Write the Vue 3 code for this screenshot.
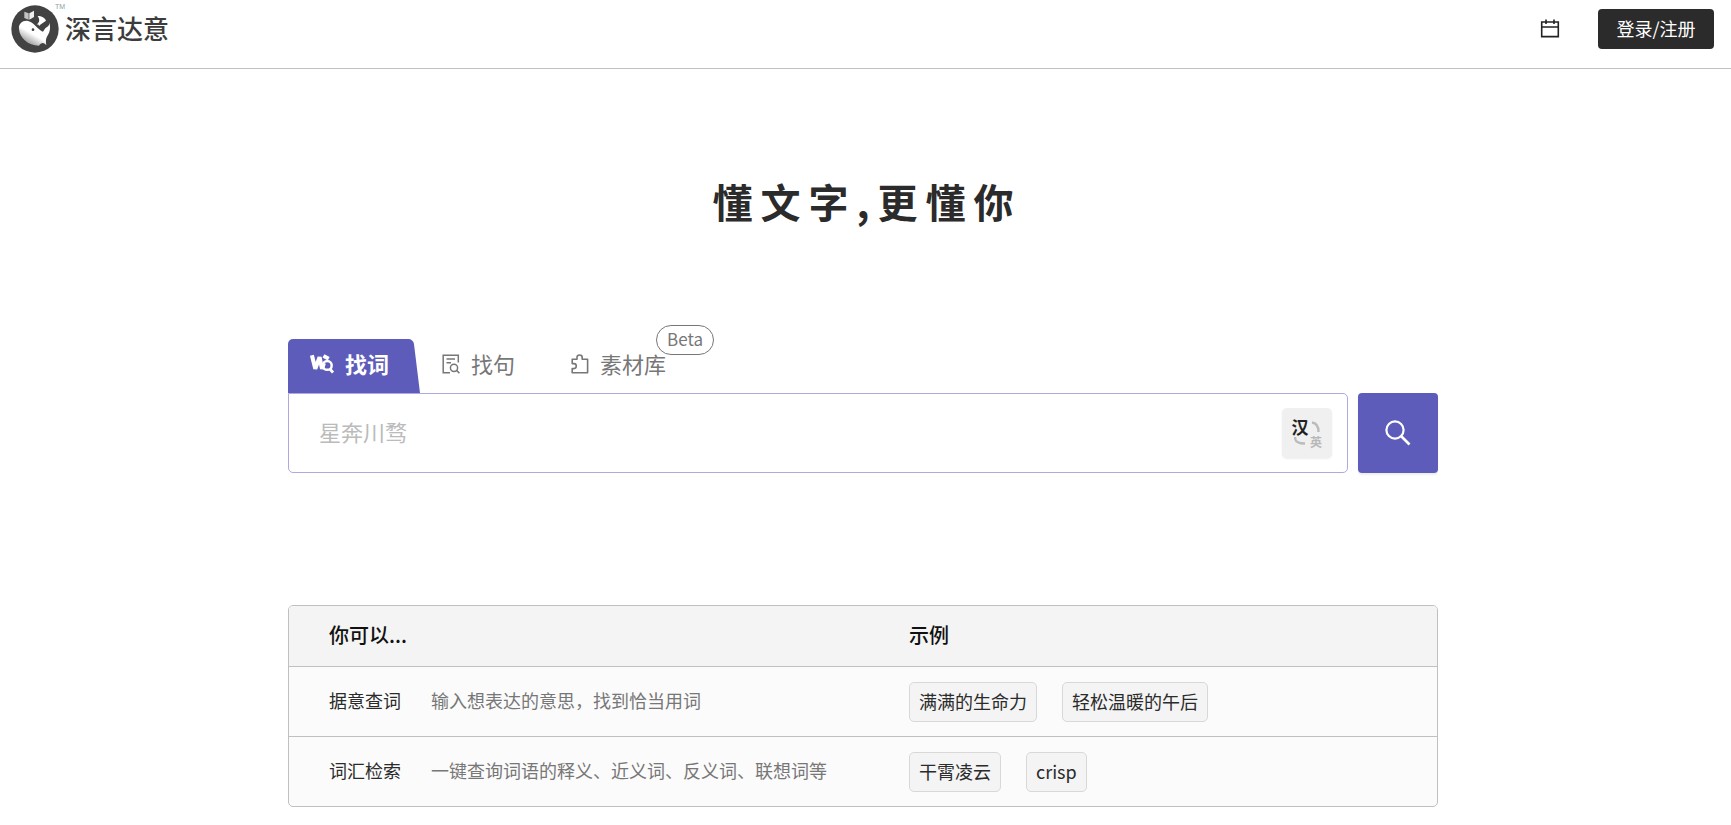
<template>
  <div class="page">
    <header class="header">
      <a class="logo" href="#" aria-label="深言达意">
        <svg class="logo-mark" viewBox="0 0 144 144" aria-hidden="true">
          <defs>
            <linearGradient id="whale" x1="0.15" y1="0.9" x2="0.55" y2="0.35">
              <stop offset="0" stop-color="#8f8b8b" />
              <stop offset="0.7" stop-color="#ffffff" />
            </linearGradient>
          </defs>
          <circle cx="72" cy="72" r="71" fill="#424242" />
          <path d="M24 72C22 55 37 45 51 48C68 51 80 74 96 80C100 76 101 70 108 66C113 63 115 58 115 53C119 66 118 80 109 93C104 101 104 110 106 121C98 112 91 112 84 122C50 122 26 98 24 72Z" fill="url(#whale)" />
          <path d="M80 33C92 33 102 39 105 47C98 53 90 55 84 63C83 57 81 58 77 59C86 52 87 43 80 33Z" fill="#fff" />
          <path d="M40 20L53 25V44L40 39Z" fill="#c4c4c4" />
          <path d="M55 25L69 17V36L55 44Z" fill="#f0f0f0" />
          <circle cx="66" cy="74" r="4" fill="#424242" />
        </svg>
        <span class="logo-text">深言达意</span>
        <span class="logo-tm">TM</span>
      </a>
      <div class="header-right">
        <button class="calendar" type="button" aria-label="日历">
          <svg viewBox="0 0 20 20" width="20" height="20" fill="none" stroke="#222" stroke-width="1.6">
            <path d="M1.7 3H18.3V17.6H1.7ZM1.7 8H18.3M6 0.4V5M14 0.4V5" />
          </svg>
        </button>
        <button class="login" type="button">登录/注册</button>
      </div>
    </header>

    <main class="main">
      <h1 class="slogan">懂文字,更懂你</h1>

      <!-- 搜索类型切换 -->
      <nav class="tabs">
        <button
          v-for="tab in tabs"
          :key="tab.key"
          type="button"
          class="tab"
          :class="{ active: tab.key === activeTab }"
          @click="activeTab = tab.key"
        >
          <svg v-if="tab.key === 'word'" class="tab-icon wide" viewBox="0 0 25 20" fill="none" stroke="currentColor">
            <path d="M2 1L5.5 15L10 3L12.5 15L14.5 9" stroke-width="4.2" stroke-linejoin="bevel" />
            <path d="M14 1.5L19.5 4.5" stroke-width="4" />
            <circle cx="18" cy="11.5" r="4.6" stroke-width="2.6" />
            <path d="M20.5 15L24 19" stroke-width="3" />
          </svg>
          <svg v-else-if="tab.key === 'sentence'" class="tab-icon" viewBox="0 0 18 20" fill="none" stroke="currentColor" stroke-width="1.5">
            <path d="M16.3 8.5V1.2H1.2V18.8H8M4.5 5H13M4.5 8.8H9" />
            <circle cx="12" cy="13.8" r="3.6" />
            <path d="M14.6 16.4L17.4 19.2" />
          </svg>
          <svg v-else class="tab-icon" viewBox="0 0 18 20" fill="none" stroke="currentColor" stroke-width="1.6" stroke-linejoin="round">
            <path d="M1.2 5.2H6V3.5C6 0.2 11.2 0.2 11.2 3.5V5.2H16.6V18.8H1.2V14.6H3C6 14.6 6 9.6 3 9.6H1.2Z" />
          </svg>
          <span>{{ tab.name }}</span>
          <span v-if="tab.beta" class="beta">Beta</span>
        </button>
      </nav>

      <form class="search" @submit.prevent>
        <div class="search-box">
          <input v-model="keyword" class="search-input" type="text" placeholder="星奔川骛" aria-label="搜索" />
          <button class="lang" type="button" aria-label="切换语言" @click="toggleLang">
            <span class="lang-main">{{ langs[0] }}</span>
            <svg class="arc" viewBox="0 0 12 12"><path d="M2 1.5C6.5 2 8.5 4.5 8.5 11" /></svg>
            <svg class="arc" viewBox="0 0 12 12"><path d="M1 1C1 6 4 7.5 11 7.5" /></svg>
            <span class="lang-sub">{{ langs[1] }}</span>
          </button>
        </div>
        <button class="search-btn" type="submit" aria-label="搜索">
          <svg viewBox="0 0 26 26" width="26" height="26" fill="none" stroke="#fff" stroke-width="2.2">
            <circle cx="10" cy="10" r="8.6" />
            <path d="M16 16L24.5 24.5" stroke-width="2.6" />
          </svg>
        </button>
      </form>

      <!-- 使用示例 -->
      <table class="guide">
        <colgroup>
          <col class="col-name" />
          <col />
          <col class="col-examples" />
        </colgroup>
        <thead>
          <tr>
            <th colspan="2">你可以...</th>
            <th>示例</th>
          </tr>
        </thead>
        <tbody>
          <tr v-for="row in guides" :key="row.name">
            <td class="guide-name">{{ row.name }}</td>
            <td class="guide-desc">{{ row.desc }}</td>
            <td>
              <div class="examples">
                <button
                  v-for="item in row.examples"
                  :key="item"
                  type="button"
                  class="example"
                  @click="keyword = item"
                >{{ item }}</button>
              </div>
            </td>
          </tr>
        </tbody>
      </table>
    </main>
  </div>
</template>

<script setup>
import { ref } from 'vue';

const activeTab = ref('word');
const keyword = ref('');
const langs = ref(['汉', '英']);

const tabs = [
  { key: 'word', name: '找词' },
  { key: 'sentence', name: '找句' },
  { key: 'material', name: '素材库', beta: true },
];

const guides = [
  { name: '据意查词', desc: '输入想表达的意思，找到恰当用词', examples: ['满满的生命力', '轻松温暖的午后'] },
  { name: '词汇检索', desc: '一键查询词语的释义、近义词、反义词、联想词等', examples: ['干霄凌云', 'crisp'] },
];

const toggleLang = () => {
  langs.value = [langs.value[1], langs.value[0]];
};
</script>

<style>
body {
  margin: 0;
  background-color: #fff;
}
</style>

<style scoped>
.page {
  font-family: "Noto Sans CJK SC", sans-serif;
  font-size: 18px;
  color: #2b2b2b;
}

button {
  padding: 0;
  border: none;
  background: none;
  font: inherit;
  color: inherit;
  cursor: pointer;
}

svg {
  display: block;
}

.header {
  display: flex;
  justify-content: space-between;
  align-items: center;
  padding: 5px 17px 15px 11px;
  border-bottom: 1px solid #c0c0c0;
}

.logo {
  position: relative;
  display: flex;
  align-items: center;
  gap: 6px;
  color: #3c3c3c;
  text-decoration: none;
}

.logo-mark {
  width: 48px;
  height: 48px;
}

.logo-text {
  padding-bottom: 2px;
  font-size: 26px;
  font-weight: 500;
  line-height: 46px;
}

.logo-tm {
  position: absolute;
  left: 44px;
  top: -2px;
  font-family: "Liberation Sans", sans-serif;
  font-size: 7px;
  line-height: 8px;
  color: #8aa0a8;
}

.header-right {
  display: flex;
  align-items: center;
  gap: 38px;
}

.login {
  width: 116px;
  height: 40px;
  padding-bottom: 2px;
  border-radius: 4px;
  background-color: #2b2b2b;
  color: #fff;
}

.main {
  max-width: 1150px;
  margin: 0 auto;
  padding: 102px 5px 16px 0;
}

.slogan {
  margin: 0 0 108px;
  padding-left: 8px;
  text-align: center;
  font-size: 40px;
  font-weight: 700;
  letter-spacing: 8px;
  line-height: 60px;
}

.tabs {
  display: flex;
  height: 54px;
}

.tab {
  position: relative;
  display: flex;
  align-items: center;
  gap: 11px;
  padding: 0 34px 4px 22px;
  font-size: 22px;
  color: #777;
}

.tab > * {
  position: relative;
  z-index: 1;
}

.tab > span {
  padding-bottom: 2px;
}

.tab.active {
  padding-right: 31px;
  font-weight: 700;
  color: #fff;
}

/* 选中标签的斜边背景 */
.tab.active::before,
.tab.active::after {
  content: "";
  position: absolute;
  top: 0;
  bottom: 0;
  z-index: 0;
  background-color: #5e5cba;
}

.tab.active::before {
  left: 0;
  right: 40px;
  border-radius: 5px 0 0 0;
}

.tab.active::after {
  right: 0;
  width: 60px;
  border-radius: 0 5px 0 0;
  transform: skewX(7deg);
  transform-origin: bottom right;
}

.tab-icon {
  width: 18px;
  height: 20px;
}

.tab-icon.wide {
  width: 24px;
}

.tab > .beta {
  position: absolute;
  left: 107px;
  top: -14px;
  padding: 0 10px 2px;
  border: 1px solid #777;
  border-radius: 15px;
  font-size: 17px;
  line-height: 26px;
}

.search {
  display: flex;
  gap: 10px;
}

.search-box {
  flex: 1;
  display: flex;
  align-items: center;
  box-sizing: border-box;
  height: 80px;
  padding: 0 15px 0 30px;
  border: 1px solid #aea9de;
  border-radius: 0 5px 5px 5px;
}

.search-input {
  flex: 1;
  min-width: 0;
  padding: 0 0 4px;
  border: none;
  outline: none;
  background: none;
  font-family: inherit;
  font-size: 22px;
  color: #2b2b2b;
}

.search-input::placeholder {
  color: #bbb;
}

.lang {
  display: grid;
  grid-template-columns: 18px 14px;
  grid-template-rows: 18px 12px;
  place-content: center;
  place-items: center;
  width: 50px;
  height: 50px;
  border-radius: 5px;
  background-color: #f0f0f0;
  box-shadow: 0 1px 2px #eee;
}

.lang-main {
  font-size: 17px;
  font-weight: 700;
  line-height: 18px;
  color: #222;
}

.lang-sub {
  font-size: 12px;
  font-weight: 700;
  line-height: 12px;
  color: #b8b8b8;
}

.arc {
  width: 12px;
  height: 12px;
  fill: none;
  stroke: #bbb;
  stroke-width: 2.4;
}

.search-btn {
  display: flex;
  align-items: center;
  justify-content: center;
  width: 80px;
  height: 80px;
  border-radius: 4px;
  background-color: #5e5cba;
  box-shadow: 0 2px 2px #eee;
}

.guide {
  width: 100%;
  margin-top: 132px;
  table-layout: fixed;
  border: 1px solid #c0c0c0;
  border-radius: 5px;
  border-spacing: 0;
  background-color: #fbfbfb;
  overflow: hidden;
}

.col-name {
  width: 142px;
}

.col-examples {
  width: 528px;
}

.guide th {
  box-sizing: border-box;
  height: 60px;
  padding: 0 0 3px 40px;
  background-color: #f4f4f4;
  font-size: 20px;
  font-weight: 500;
  text-align: left;
  color: #111;
}

.guide th:last-child {
  padding-left: 0;
}

.guide td {
  box-sizing: border-box;
  height: 70px;
  padding: 0;
  border-top: 1px solid #c0c0c0;
}

.guide .guide-name {
  padding: 0 0 3px 40px;
}

.guide .guide-desc {
  padding-bottom: 3px;
  color: #777;
}

.examples {
  display: flex;
  gap: 25px;
}

.example {
  height: 40px;
  padding: 0 9px 2px;
  border: 1px solid #d8d8d8;
  border-radius: 5px;
  background-color: #f4f4f4;
}
</style>
